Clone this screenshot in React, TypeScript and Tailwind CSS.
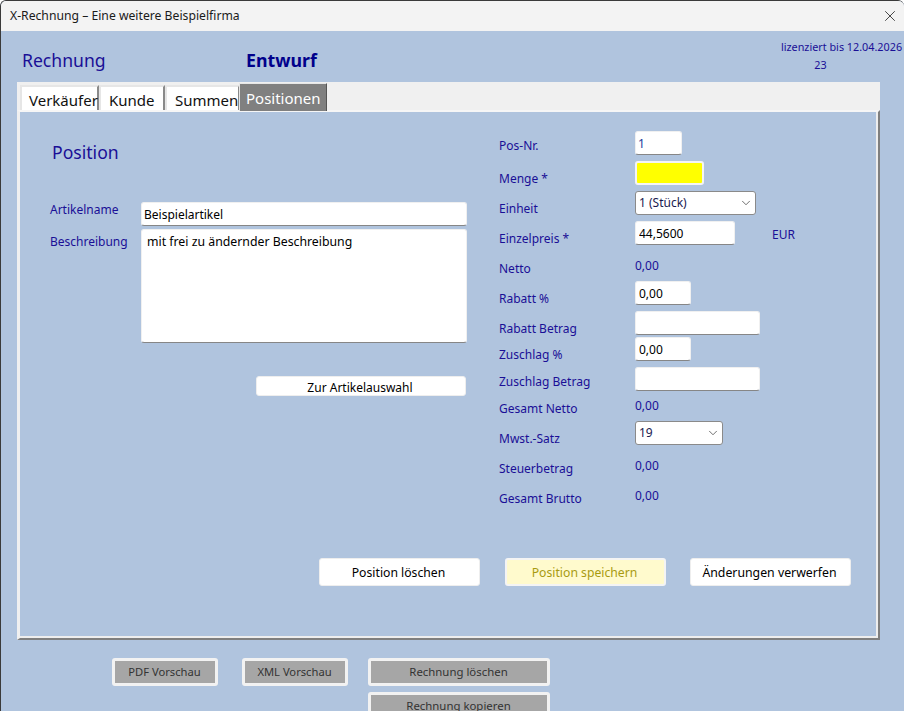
import React from 'react';
import { ChevronDown, X } from 'lucide-react';

const labelClass = 'text-[12px] leading-[16px] text-[#1a0f96]';
const inputClass =
  'h-[24px] rounded-[3px] border border-[#f0f0f0] border-b-[#868686] bg-white px-[3px] text-[12px] text-black outline-none';

type Row = {
  label: string;
  height: string;
  labelTop: string;
  field: React.ReactNode;
};

const Value = ({ children }: { children: string }) => (
  <div className={`pt-[7px] ${labelClass}`}>{children}</div>
);

const Select = ({ value, width }: { value: string; width: string }) => (
  <div className={`flex h-[24px] items-center justify-between rounded-[3px] border border-[#8a8a8a] bg-white pl-[3px] pr-[2px] text-[12px] text-[#1a1a50] ${width}`}>
    <span>{value}</span>
    <ChevronDown className="h-[14px] w-[14px] text-[#333]" strokeWidth={1.2} />
  </div>
);

const rows: Row[] = [
  { label: 'Pos-Nr.', height: 'h-[30px]', labelTop: 'pt-[7px]', field: <input readOnly value="1" className={`${inputClass} w-[47px] !pl-[2px] !text-[#1a3c9c]`} /> },
  { label: 'Menge *', height: 'h-[30px]', labelTop: 'pt-[10px]', field: <div className="h-[24px] w-[69px] rounded-[3px] border-2 border-[#f4f4f4] bg-[#ffff00]" /> },
  { label: 'Einheit', height: 'h-[30px]', labelTop: 'pt-[10px]', field: <Select value="1 (Stück)" width="w-[121px]" /> },
  { label: 'Einzelpreis *', height: 'h-[30px]', labelTop: 'pt-[10px]', field: (
    <div className="flex">
      <input readOnly value="44,5600" className={`${inputClass} w-[100px]`} />
      <span className={`ml-[37px] pt-[6px] ${labelClass}`}>EUR</span>
    </div>
  ) },
  { label: 'Netto', height: 'h-[30px]', labelTop: 'pt-[10px]', field: <Value>0,00</Value> },
  { label: 'Rabatt %', height: 'h-[30px]', labelTop: 'pt-[10px]', field: <input readOnly value="0,00" className={`${inputClass} w-[56px]`} /> },
  { label: 'Rabatt Betrag', height: 'h-[26px]', labelTop: 'pt-[10px]', field: <input readOnly value="" className={`${inputClass} w-[125px]`} /> },
  { label: 'Zuschlag %', height: 'h-[30px]', labelTop: 'pt-[10px]', field: <input readOnly value="0,00" className={`${inputClass} w-[56px]`} /> },
  { label: 'Zuschlag Betrag', height: 'h-[24px]', labelTop: 'pt-[7px]', field: <input readOnly value="" className={`${inputClass} w-[125px]`} /> },
  { label: 'Gesamt Netto', height: 'h-[30px]', labelTop: 'pt-[10px]', field: <Value>0,00</Value> },
  { label: 'Mwst.-Satz', height: 'h-[30px]', labelTop: 'pt-[10px]', field: <Select value="19" width="w-[88px]" /> },
  { label: 'Steuerbetrag', height: 'h-[30px]', labelTop: 'pt-[10px]', field: <Value>0,00</Value> },
  { label: 'Gesamt Brutto', height: 'h-[30px]', labelTop: 'pt-[10px]', field: <Value>0,00</Value> },
];

const tabClass =
  'mt-[3px] h-[25px] border-r-2 border-l-2 border-t-2 border-r-[#8a8a8a] border-l-[#e6e6e6] border-t-[#e6e6e6] bg-white text-[15px] leading-[26px] text-[#111]';

const actionClass =
  'flex h-[28px] w-[161px] items-center justify-center rounded-[3px] border border-[#eeeeee] bg-white pt-[2px] text-black';
const greyClass =
  'flex h-[28px] items-center justify-center rounded-[3px] border-[3px] border-[#f2f2f2] bg-[#a6a6a6] text-[#333]';

export default function App() {
  return (
    <div
      className="h-[711px] w-[904px] overflow-hidden rounded-t-[6px] border-t border-l border-[#3a3a3a] bg-[#b0c4de]"
      style={{ fontFamily: '"Noto Sans", sans-serif' }}
    >
      {/* Title bar */}
      <div className="flex h-[30px] items-center justify-between bg-[#f3f3f3] pl-[9px] pr-[5px] text-[12.2px] text-[#1a1a1a]">
        <span>X-Rechnung – Eine weitere Beispielfirma</span>
        <X className="h-[18px] w-[18px] text-[#222]" strokeWidth={1.1} />
      </div>

      {/* Header */}
      <div className="flex h-[51px]">
        <div className="w-[245px] pl-[21px] pt-[16px] text-[17.6px] leading-[26px] text-[#1a0f96]">Rechnung</div>
        <div className="pt-[16px] text-[17.8px] font-bold leading-[26px] text-[#00008b]">Entwurf</div>
        <div className="ml-auto mr-[1px] flex w-[123px] flex-col items-center pt-[7px] text-[10.8px] leading-[18px] text-[#1a0f96]">
          <span className="whitespace-nowrap">lizenziert bis 12.04.2026</span>
          <span className="mr-[42px]">23</span>
        </div>
      </div>

      {/* Tabs */}
      <div className="ml-[16px] flex h-[28px] w-[863px] items-start bg-[#f0f0f0] pl-[3px]">
        <div className={`${tabClass} w-[79px] pl-[7px]`}>Verkäufer</div>
        <div className={`${tabClass} w-[66px] pl-[8px]`}>Kunde</div>
        <div className={`${tabClass} w-[75px] pl-[8px]`}>Summen</div>
        <div className="relative z-10 -ml-[1px] mt-[1px] h-[28px] w-[88px] border-t border-l border-r border-t-[#e6e6e6] border-l-[#e6e6e6] border-r-[#555] bg-[#808080] pl-[6px] text-[15px] leading-[28px] text-white">Positionen</div>
      </div>

      {/* Panel */}
      <div className="ml-[16px] flex h-[530px] w-[863px] flex-col border-t-2 border-r-2 border-b-2 border-l-[3px] border-t-[#f6f6f6] border-r-[#7f7f7f] border-b-[#7f7f7f] border-l-[#f0f0f0] shadow-[inset_-2px_-2px_0_#eeeeee]">
        <div className="flex flex-1">
          {/* Left column */}
          <div className="w-[479px] pt-[27px]">
            <div className="pl-[32px] text-[17.6px] leading-[26px] text-[#1a0f96]">Position</div>
            <div className="mt-[37px] flex pl-[30px]">
              <div className="w-[91px]">
                <div className={labelClass}>Artikelname</div>
                <div className={`pt-[16px] ${labelClass}`}>Beschreibung</div>
              </div>
              <div className="flex w-[326px] flex-col">
                <input readOnly value="Beispielartikel" className={`${inputClass} w-full !pl-[2px]`} />
                <div className="mt-[3px] h-[114px] w-full whitespace-pre rounded-[3px] border border-[#f0f0f0] border-b-[#868686] bg-white pl-[5px] pt-[3px] text-[12.3px] text-black">mit frei zu ändernder Beschreibung</div>
                <button className="ml-[115px] mt-[33px] h-[20px] w-[210px] rounded-[3px] border border-[#eeeeee] bg-white pr-[2px] pt-[2px] text-[12px] text-black">Zur Artikelauswahl</button>
              </div>
            </div>
          </div>

          {/* Right column */}
          <div className="pt-[19px]">
            {rows.map((row) => (
              <div key={row.label} className={`flex ${row.height}`}>
                <div className={`w-[136px] ${row.labelTop} ${labelClass}`}>{row.label}</div>
                {row.field}
              </div>
            ))}
          </div>
        </div>

        {/* Actions */}
        <div className="mb-[52px] ml-[299px] flex">
          <button className={`${actionClass} pr-[2px] text-[12.2px]`}>Position löschen</button>
          <button className={`${actionClass} ml-[25px] border-2 border-[#f4f4f4] !bg-[#fffacd] pr-[2px] text-[12.2px] !text-[#a89a10]`}>Position speichern</button>
          <button className={`${actionClass} ml-[24px] pr-[2px] text-[12.3px]`}>Änderungen verwerfen</button>
        </div>
      </div>

      {/* Footer buttons */}
      <div className="ml-[111px] mt-[18px] flex items-start">
        <button className={`${greyClass} w-[106px] pr-[1px] text-[11.2px]`}>PDF Vorschau</button>
        <button className={`${greyClass} ml-[24px] w-[106px] pr-[1px] text-[11.2px]`}>XML Vorschau</button>
        <div className="ml-[20px] flex flex-col gap-[6px]">
          <button className={`${greyClass} w-[182px] pr-[1px] text-[11.4px]`}>Rechnung löschen</button>
          <button className={`${greyClass} w-[182px] pr-[1px] text-[11.4px]`}>Rechnung kopieren</button>
        </div>
      </div>
    </div>
  );
}
